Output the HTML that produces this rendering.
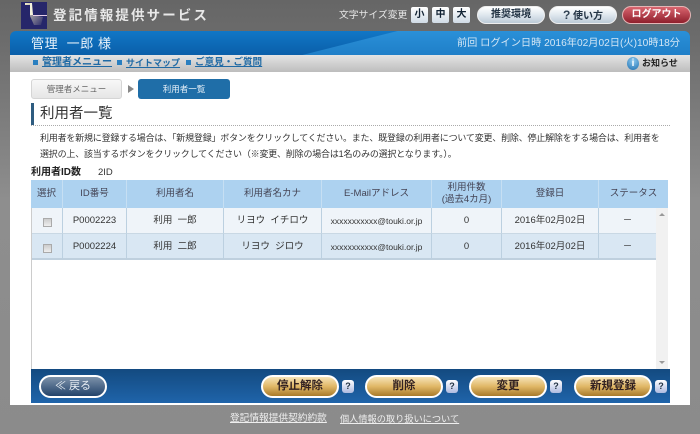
<!DOCTYPE html>
<html lang="ja"><head><meta charset="utf-8"><title>登記情報提供サービス</title>
<style>
*{box-sizing:border-box}
html,body{margin:0;padding:0}
body{width:700px;height:434px;position:relative;overflow:hidden;background:linear-gradient(#666 0,#6c6c6c 40px,#8e8e8e 200px,#8b8b8b 434px);font-family:"Liberation Sans","Noto Sans CJK JP",sans-serif;color:#333}
.a{position:absolute;white-space:nowrap}
.c{text-align:center}
.sz{top:7px;width:17px;height:16px;border-radius:2px;background:linear-gradient(#fff,#cfdbe6);color:#123;font-size:10px;font-weight:bold;line-height:16px;text-align:center}
.pill{top:6px;height:18px;border-radius:9px;background:linear-gradient(#fff,#dfe7ee 50%,#bccad6);border:1px solid #eee;color:#234;font-size:10px;font-weight:bold;line-height:16px;text-align:center}
.nav{top:56px;font-size:10px;font-weight:bold;color:#1f6aa5;text-decoration:underline;line-height:14px}
.sq{width:5px;height:5px;top:60px;background:#2a7fc0}
.th{top:180px;height:28px;background:#add2f0;color:#445;font-size:9.5px;line-height:28px;text-align:center;border-right:1px solid #c6dff3}
.td{height:26px;font-size:9.5px;line-height:26px;text-align:center;color:#333;border-right:1px solid #bcd0e0}
.r1{top:208px;background:#eff4f9;border-bottom:1px solid #c9d8e4}
.r2{top:234px;background:#d9e7f3;border-bottom:2px solid #bfd0de}
.cb{width:9px;height:9px;left:43px;background:linear-gradient(#ccc,#eee);border:1px solid #aaa}
.gold{top:375px;width:78px;height:23px;border-radius:12px;border:2px solid #fff;background:linear-gradient(#f6e4b8,#e0b766 50%,#a87a2a);color:#322;font-size:11.5px;font-weight:bold;line-height:19px;text-align:center}
.q{top:380px;width:12px;height:13px;border-radius:3px;background:linear-gradient(#fff,#aebbe0);color:#234;font-size:9px;font-weight:bold;line-height:13px;text-align:center}
</style></head><body>
<!-- logo -->
<svg class="a" style="left:21px;top:2px" width="26" height="27" viewBox="0 0 26 27">
<defs><linearGradient id="g" x1="0" y1="0" x2="1" y2="1"><stop offset="0" stop-color="#f5efc8"/><stop offset="1" stop-color="#2c2c6a"/></linearGradient></defs>
<rect width="26" height="27" fill="#26266a"/>
<path d="M4 1h7v1.500h-1L12 13l10 2-2 8h-7L9 14V3H4Z" fill="url(#g)"/>
<path d="M9 3V1h2l1 12H9Z" fill="#f5f2dc"/>
<rect x="12" y="13" width="14" height="1" fill="#e8cfe8"/>
</svg>
<div class="a" style="left:53px;top:7px;font-size:13.5px;letter-spacing:2.1px;color:#e8e8e8;font-weight:bold;line-height:18px">登記情報提供サービス</div>
<div class="a" style="left:339px;top:9px;font-size:9.8px;color:#e6e6e6;line-height:14px">文字サイズ変更</div>
<div class="a sz" style="left:411px">小</div>
<div class="a sz" style="left:432px">中</div>
<div class="a sz" style="left:453px">大</div>
<div class="a pill" style="left:477px;width:68px">推奨環境</div>
<div class="a pill" style="left:549px;width:68px"><span style="font-size:12px;color:#345">?</span> 使い方</div>
<div class="a pill" style="left:622px;width:69px;background:linear-gradient(#d9656f,#8f1f2c);color:#fff;border-color:#e4b5b5">ログアウト</div>
<!-- blue band -->
<div class="a" style="left:10px;top:31px;width:680px;height:24px;border-radius:6px 6px 0 0;background:linear-gradient(#1177c6,#0a5fa9)"></div>
<div class="a" style="left:10px;top:31px;width:680px;height:24px;border-radius:6px 6px 0 0;background:linear-gradient(#2a90d8,#1f7fc8);clip-path:polygon(43% 100%,57% 0,100% 0,100% 100%)"></div>
<div class="a" style="left:31px;top:35px;font-size:13px;color:#e8f2fa;line-height:17px;letter-spacing:.6px">管理&nbsp; 一郎 様</div>
<div class="a" style="right:20px;top:37px;font-size:10.2px;color:#d3e6f5;line-height:14px">前回 ログイン日時 2016年02月02日(火)10時18分</div>
<!-- nav -->
<div class="a" style="left:10px;top:55px;width:680px;height:17px;background:linear-gradient(#e4e4e4,#bdbdbd)"></div>
<div class="a sq" style="left:33px"></div><div class="a nav" style="left:42px">管理者メニュー</div>
<div class="a sq" style="left:117px"></div><div class="a nav" style="left:126px;font-size:9px">サイトマップ</div>
<div class="a sq" style="left:186px"></div><div class="a nav" style="left:195px;font-size:9.6px">ご意見・ご質問</div>
<div class="a" style="left:627px;top:57px;width:12px;height:13px;border-radius:50%;background:radial-gradient(circle at 50% 30%,#8cc8ee,#1d6fb0);color:#fff;font-size:10px;font-weight:bold;line-height:13px;text-align:center">i</div>
<div class="a" style="left:642px;top:57px;font-size:9px;font-weight:bold;color:#222;line-height:13px">お知らせ</div>
<!-- content -->
<div class="a" style="left:10px;top:72px;width:680px;height:333px;background:#fff"></div>
<div class="a c" style="left:31px;top:79px;width:91px;height:20px;background:linear-gradient(#f8f8f8,#e6e6e6);border:1px solid #d5d5d5;border-radius:3px;font-size:8.5px;line-height:18px;color:#666">管理者メニュー</div>
<div class="a" style="left:128px;top:85px;width:0;height:0;border-left:6px solid #888;border-top:4px solid transparent;border-bottom:4px solid transparent"></div>
<div class="a c" style="left:138px;top:79px;width:92px;height:20px;background:#1f6ea8;border-radius:3px;font-size:8.5px;line-height:20px;color:#e8f2fa">利用者一覧</div>
<div class="a" style="left:31px;top:103px;width:3px;height:22px;background:#2e5c80"></div>
<div class="a" style="left:40px;top:104px;font-size:14.5px;line-height:20px;color:#333">利用者一覧</div>
<div class="a" style="left:31px;top:125px;width:639px;border-top:1px dotted #aaa"></div>
<div class="a" style="left:40px;top:130px;font-size:9px;letter-spacing:-.2px;line-height:16px;color:#333">利用者を新規に登録する場合は、「新規登録」ボタンをクリックしてください。また、既登録の利用者について変更、削除、停止解除をする場合は、利用者を<br>選択の上、該当するボタンをクリックしてください（※変更、削除の場合は1名のみの選択となります。）。</div>
<div class="a" style="left:31px;top:166px;font-size:10px;font-weight:bold;line-height:14px;color:#222">利用者ID数</div>
<div class="a" style="left:98px;top:166px;font-size:9.5px;line-height:14px">2ID</div>
<!-- table -->
<div class="a" style="left:31px;top:208px;width:1px;height:161px;background:#ccc"></div>
<div class="a" style="left:656px;top:208px;width:12px;height:161px;background:#f1f1f1"></div>
<div class="a" style="left:659px;top:213px;width:0;height:0;border-bottom:3px solid #999;border-left:3px solid transparent;border-right:3px solid transparent"></div>
<div class="a" style="left:659px;top:361px;width:0;height:0;border-top:3px solid #999;border-left:3px solid transparent;border-right:3px solid transparent"></div>
<div class="a th" style="left:31px;width:32px">選択</div>
<div class="a th" style="left:63px;width:64px">ID番号</div>
<div class="a th" style="left:127px;width:97px">利用者名</div>
<div class="a th" style="left:224px;width:98px">利用者名カナ</div>
<div class="a th" style="left:322px;width:110px">E-Mailアドレス</div>
<div class="a th" style="left:432px;width:70px;line-height:12px;padding-top:2px">利用件数<br>(過去4カ月)</div>
<div class="a th" style="left:502px;width:97px">登録日</div>
<div class="a th" style="left:599px;width:69px;border-right:0">ステータス</div>

<div class="a td r1" style="left:32px;width:31px"></div>
<div class="a td r1" style="left:63px;width:64px">P0002223</div>
<div class="a td r1" style="left:127px;width:97px">利用&nbsp; 一郎</div>
<div class="a td r1" style="left:224px;width:98px">リヨウ&nbsp; イチロウ</div>
<div class="a td r1" style="left:322px;width:110px;font-size:8.5px">xxxxxxxxxxx@touki.or.jp</div>
<div class="a td r1" style="left:432px;width:70px">0</div>
<div class="a td r1" style="left:502px;width:97px">2016年02月02日</div>
<div class="a td r1" style="left:599px;width:57px;border-right:0">－</div>

<div class="a td r2" style="left:32px;width:31px"></div>
<div class="a td r2" style="left:63px;width:64px">P0002224</div>
<div class="a td r2" style="left:127px;width:97px">利用&nbsp; 二郎</div>
<div class="a td r2" style="left:224px;width:98px">リヨウ&nbsp; ジロウ</div>
<div class="a td r2" style="left:322px;width:110px;font-size:8.5px">xxxxxxxxxxx@touki.or.jp</div>
<div class="a td r2" style="left:432px;width:70px">0</div>
<div class="a td r2" style="left:502px;width:97px">2016年02月02日</div>
<div class="a td r2" style="left:599px;width:57px;border-right:0">－</div>
<div class="a cb" style="top:218px"></div>
<div class="a cb" style="top:244px"></div>
<!-- footer bar -->
<div class="a" style="left:31px;top:369px;width:639px;height:34px;background:linear-gradient(#134a80,#1f64aa)"></div>
<div class="a c" style="left:39px;top:375px;width:68px;height:23px;border-radius:12px;border:2px solid #fff;background:linear-gradient(#7d92aa,#23436a);color:#e8eef4;font-size:11px;line-height:19px">≪ 戻る</div>
<div class="a gold" style="left:261px">停止解除</div><div class="a q" style="left:342px">?</div>
<div class="a gold" style="left:365px">削除</div><div class="a q" style="left:446px">?</div>
<div class="a gold" style="left:469px">変更</div><div class="a q" style="left:550px">?</div>
<div class="a gold" style="left:574px">新規登録</div><div class="a q" style="left:655px">?</div>
<!-- bottom links -->
<div class="a" style="left:230px;top:412px;font-size:9.7px;color:#eee;text-decoration:underline;line-height:14px">登記情報提供契約約款</div>
<div class="a" style="left:340px;top:412px;font-size:9.2px;color:#eee;text-decoration:underline;line-height:14px">個人情報の取り扱いについて</div>
</body></html>
